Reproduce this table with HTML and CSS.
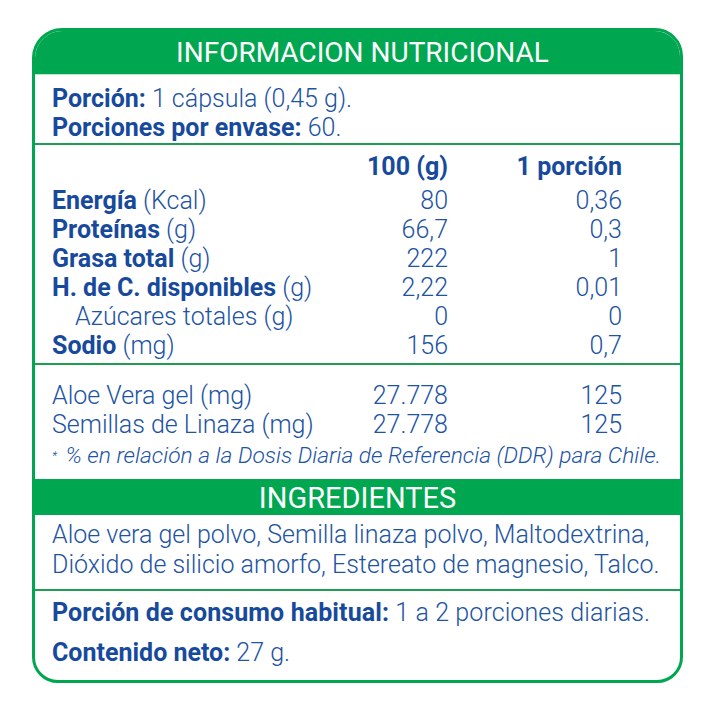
FILE: index.html
```html
<!DOCTYPE html>
<html lang="es">
<head>
<meta charset="utf-8">
<title>Información nutricional</title>
<link rel="stylesheet" href="styles.css">
</head>
<body>
<div class="card">
  <div class="title">INFORMACION NUTRICIONAL</div>
  <div class="portion">
    <div class="line"><b>Porción:</b> 1 cápsula (0,45 g).</div>
    <div class="line"><b>Porciones por envase:</b> 60.</div>
  </div>
  <div class="rule"></div>
  <div class="table">
    <div class="head"></div><div class="head num">100 (g)</div><div class="head num">1 porción</div>
    <div class="c"><b>Energía</b> (Kcal)</div><div class="c num">80</div><div class="c num">0,36</div>
    <div class="c"><b>Proteínas</b> (g)</div><div class="c num">66,7</div><div class="c num">0,3</div>
    <div class="c"><b>Grasa total</b> (g)</div><div class="c num">222</div><div class="c num">1</div>
    <div class="c"><b>H. de C. disponibles</b> (g)</div><div class="c num">2,22</div><div class="c num">0,01</div>
    <div class="c sub">Azúcares totales (g)</div><div class="c num">0</div><div class="c num">0</div>
    <div class="c"><b>Sodio</b> (mg)</div><div class="c num">156</div><div class="c num">0,7</div>
  </div>
  <div class="rule"></div>
  <div class="table extra">
    <div class="c">Aloe Vera gel (mg)</div><div class="c num">27.778</div><div class="c num">125</div>
    <div class="c">Semillas de Linaza (mg)</div><div class="c num">27.778</div><div class="c num">125</div>
  </div>
  <div class="note"><span class="ast">*</span> % en relación a la Dosis Diaria de Referencia (DDR) para Chile.</div>
  <div class="band">INGREDIENTES</div>
  <div class="ingredients">
    <div class="iline">Aloe vera gel polvo, Semilla linaza polvo, Maltodextrina,</div>
    <div class="iline">Dióxido de silicio amorfo, Estereato de magnesio, Talco.</div>
  </div>
  <div class="rule"></div>
  <div class="footer">
    <div class="line first"><b>Porción de consumo habitual:</b> 1 a 2 porciones diarias.</div>
    <div class="line"><b>Contenido neto:</b> 27 g.</div>
  </div>
</div>
</body>
</html>
```
FILE: styles.css
```css
html, body {
  margin: 0;
  padding: 0;
  background: #ffffff;
}
body {
  font-family: Roboto, "Liberation Sans", sans-serif;
  color: #2153a3;
}
b {
  font-weight: 700;
  color: #174a9c;
}
.card {
  margin: 28px 0 0 32px;
  width: 651px;
  height: 655px;
  box-sizing: border-box;
  border: 3px solid #00a650;
  border-radius: 30px 28px 26px 26px;
  overflow: hidden;
  background: #fff;
}
.title {
  background: #00a650;
  color: #fff;
  height: 44px;
  line-height: 46px;
  font-size: 28px;
  font-weight: 400;
  text-align: center;
  padding-left: 10px;
  margin-top: -1px;
  border-bottom: 1px solid #b9e6c9;
}
.portion {
  padding: 9px 0 1px 17px;
}
.line {
  font-size: 25px;
  line-height: 29px;
  font-weight: 300;
  white-space: nowrap;
}
.rule {
  height: 2px;
  background: #1f9d52;
}
.table {
  display: grid;
  grid-template-columns: 1fr 120px 174px;
  padding: 7px 58px 3px 17px;
  font-size: 25px;
  line-height: 29px;
  font-weight: 300;
}
.head {
  font-weight: 700;
  color: #174a9c;
  margin-bottom: 5px;
}
.c {
  white-space: nowrap;
}
.num {
  text-align: right;
}
.sub {
  padding-left: 23px;
}
.extra {
  padding-top: 16px;
  padding-bottom: 0;
}
.note {
  padding: 2px 0 0 17px;
  height: 37px;
  font-size: 22.8px;
  line-height: 30px;
  font-style: italic;
  font-weight: 300;
  white-space: nowrap;
}
.ast {
  font-size: 12px;
  vertical-align: 3px;
  margin-right: 3px;
}
.band {
  background: #00a650;
  color: #fff;
  height: 36px;
  line-height: 38px;
  font-size: 29px;
  text-align: center;
  margin-top: 1px;
}
.ingredients {
  padding: 5px 0 9px 17px;
}
.iline {
  font-size: 25px;
  line-height: 30px;
  font-weight: 300;
  white-space: nowrap;
}
.footer {
  padding: 7px 0 0 17px;
}
.footer .line {
  height: 40px;
  line-height: 29px;
}
.footer .first {
  letter-spacing: 0.1px;
}
```
